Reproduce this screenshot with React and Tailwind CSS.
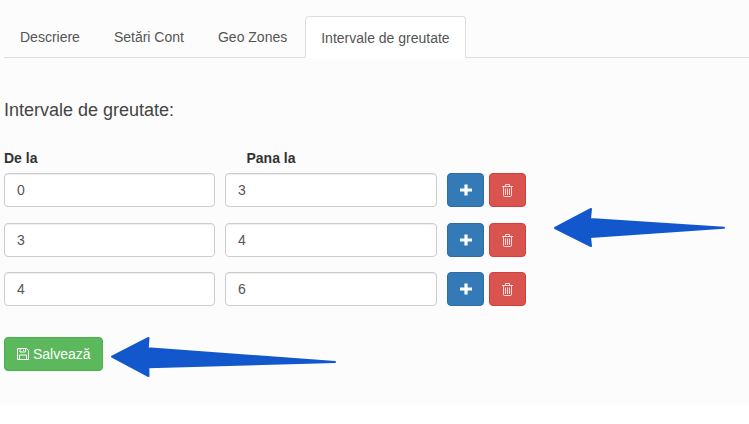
const FONT = "font-['Liberation_Sans',Arial,sans-serif]";

const ROWS = [
    { from: "0", to: "3", gap: "mb-4" },
    { from: "3", to: "4", gap: "mb-[15px]" },
    { from: "4", to: "6", gap: "" },
];

function PlusIcon() {
    return (
        <svg width="12" height="12" viewBox="0 0 12 12" fill="currentColor" className="-mt-[1px]">
            <path d="M4.4 0.5h3.2v3.9H12v3.2H7.6v3.9H4.4V7.6H0V4.4h4.4z" />
        </svg>
    );
}

function TrashIcon() {
    return (
        <svg width="11" height="13" viewBox="0 0 11 13" fill="none" stroke="currentColor" strokeWidth="0.9" className="opacity-90">
            <path d="M0 2.5h11M3.5 2.5V.5h4v2M1.5 2.5v9c0 .6.4 1 1 1h6c.6 0 1-.4 1-1v-9" />
            <path d="M3.5 4.5v6.5M5.5 4.5v6.5M7.5 4.5v6.5" />
        </svg>
    );
}

function SaveIcon() {
    return (
        <svg width="12" height="12" viewBox="0 0 12 12" fill="none" stroke="currentColor" strokeWidth="1">
            <path d="M.5.5h9l2 2v9H.5z" />
            <path d="M3 .5v3.5h5.5V.5M6.5 1.5v1.5M2.5 11.5V7h7v4.5" />
        </svg>
    );
}

function Arrow({ className, width, height, points }) {
    return (
        <svg width={width} height={height} viewBox={`0 0 ${width} ${height}`} className={className}>
            <polygon points={points} fill="#1257CC" stroke="#1257CC" strokeWidth="2" strokeLinejoin="round" />
        </svg>
    );
}

function Row({ from, to, gap }) {
    return (
        <div className={`flex ${gap}`}>
            <input readOnly value={from} className="w-[211px] h-[34px] px-3 bg-white border border-[#ccc] rounded text-sm text-[#555] shadow-[inset_0_1px_1px_rgba(0,0,0,0.075)]" />
            <input readOnly value={to} className="w-[212px] h-[34px] px-3 ml-[10px] bg-white border border-[#ccc] rounded text-sm text-[#555] shadow-[inset_0_1px_1px_rgba(0,0,0,0.075)]" />
            <button className="w-[37px] h-[34px] ml-[10px] flex items-center justify-center bg-[#337ab7] border border-[#2e6da4] rounded text-white">
                <PlusIcon />
            </button>
            <button className="w-[37px] h-[34px] ml-[5px] flex items-center justify-center bg-[#d9534f] border border-[#d43f3a] rounded text-white">
                <TrashIcon />
            </button>
        </div>
    );
}

export default function App() {
    return (
        <div className={`relative w-[749px] h-[424px] bg-white overflow-hidden text-sm text-[#333] ${FONT}`}>
            <div className="h-[405px] bg-[#fcfcfc] pl-1 pt-4">
                <div className="flex h-[42px] border-b border-[#ddd]">
                    <div className="mr-[2px] px-4 pt-[11px] text-[#555]">Descriere</div>
                    <div className="mr-[2px] px-4 pt-[11px] text-[#555]">Setări Cont</div>
                    <div className="mr-[2px] px-4 pt-[11px] text-[#555]">Geo Zones</div>
                    <div className="h-[42px] px-[15px] pt-[11px] bg-white border border-[#ddd] border-b-white rounded-t text-[#555]">Intervale de greutate</div>
                </div>

                <h3 className="mt-[42px] text-lg leading-5 font-normal text-[#444]">Intervale de greutate:</h3>

                <div className="mt-[28px] flex h-5 font-bold leading-5">
                    <div className="w-[242.5px]">De la</div>
                    <div>Pana la</div>
                </div>

                <div className="mt-[5px]">
                    {ROWS.map((r) => <Row key={r.from} {...r} />)}
                </div>

                <button className="mt-[31px] h-[34px] w-[99px] flex items-center pl-3 gap-[4px] bg-[#5cb85c] border border-[#4cae4c] rounded text-white">
                    <SaveIcon />
                    <span>Salvează</span>
                </button>
            </div>

            <Arrow className="absolute left-[552px] top-[206px]" width={175} height={43}
                points="3,22 39,3 38,13 172,21.7 38,31 39,40" />
            <Arrow className="absolute left-[109px] top-[335px]" width={229} height={44}
                points="3,21.7 39.5,3 38.7,13.3 226,27 39.3,32.3 39.5,41" />
        </div>
    );
}
